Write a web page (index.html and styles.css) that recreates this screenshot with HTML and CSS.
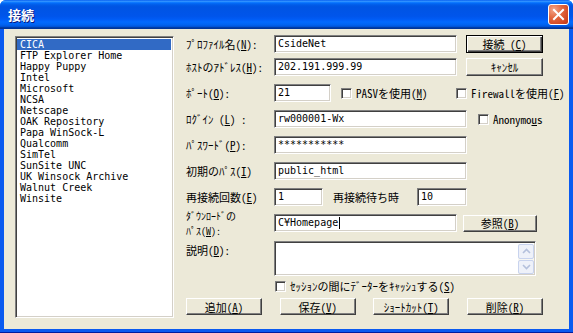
FILE: index.html
```html
<!DOCTYPE html>
<html lang="ja">

<head>
	<meta charset="utf-8">
	<title>接続</title>
	<link rel="stylesheet" href="styles.css">
</head>

<body>
	<div id="dialog">
		<div class="titlebar">
			<span class="title">接続</span>
			<div class="close-btn">
				<svg width="13" height="13" viewBox="0 0 13 13">
					<path d="M2 2 L11 11 M11 2 L2 11" stroke="#fff" stroke-width="2" stroke-linecap="square" />
				</svg>
			</div>
		</div>
		<div class="client">
			<ul class="sitelist sunken">
				<li class="selected">CICA</li>
				<li>FTP Explorer Home</li>
				<li>Happy Puppy</li>
				<li>Intel</li>
				<li>Microsoft</li>
				<li>NCSA</li>
				<li>Netscape</li>
				<li>OAK Repository</li>
				<li>Papa WinSock-L</li>
				<li>Qualcomm</li>
				<li>SimTel</li>
				<li>SunSite UNC</li>
				<li>UK Winsock Archive</li>
				<li>Walnut Creek</li>
				<li>Winsite</li>
			</ul>

			<div class="form">
				<div class="row">
					<span class="lbl">ﾌﾟﾛﾌｧｲﾙ名(<u>N</u>):</span>
					<div class="textbox sunken w-mid">CsideNet</div>
					<div class="btn default side-btn">接続 (<u>C</u>)</div>
				</div>
				<div class="row r-host">
					<span class="lbl">ﾎｽﾄのｱﾄﾞﾚｽ(<u>H</u>):</span>
					<div class="textbox sunken w-mid">202.191.999.99</div>
					<div class="btn side-btn">ｷｬﾝｾﾙ</div>
				</div>
				<div class="row">
					<span class="lbl">ﾎﾟｰﾄ(<u>O</u>):</span>
					<div class="textbox sunken w-port">21</div>
					<div class="chk chk-pasv"><span class="box sunken"></span>PASVを使用(<u>M</u>)</div>
					<div class="chk"><span class="box sunken"></span>Firewallを使用(<u>F</u>)</div>
				</div>
				<div class="row">
					<span class="lbl">ﾛｸﾞｲﾝ (<u>L</u>) :</span>
					<div class="textbox sunken w-long">rw000001-Wx</div>
					<div class="chk chk-anon"><span class="box sunken"></span>Anonymo<u>u</u>s</div>
				</div>
				<div class="row">
					<span class="lbl">ﾊﾟｽﾜｰﾄﾞ(<u>P</u>):</span>
					<div class="textbox sunken w-long">***********</div>
				</div>
				<div class="row">
					<span class="lbl">初期のﾊﾟｽ(<u>I</u>)</span>
					<div class="textbox sunken w-long">public_html</div>
				</div>
				<div class="row">
					<span class="lbl">再接続回数(<u>E</u>)</span>
					<div class="textbox sunken w-small">1</div>
					<span class="lbl-wait">再接続待ち時</span>
					<div class="textbox sunken w-small2">10</div>
				</div>
				<div class="row">
					<span class="lbl lbl-2line">ﾀﾞｳﾝﾛｰﾄﾞの<br>ﾊﾟｽ(<u>W</u>):</span>
					<div class="textbox sunken w-mid">C¥Homepage<span class="caret"></span></div>
					<div class="btn browse-btn">参照(<u>B</u>)</div>
				</div>
				<div class="row row-memo">
					<span class="lbl lbl-memo">説明(<u>D</u>):</span>
					<div class="memo sunken">
						<div class="scrollbar">
							<div class="sb-arrow">
								<svg width="9" height="6" viewBox="0 0 9 6"><path d="M1 5 L4.5 1.5 L8 5" fill="none" stroke="#b4c0dc" stroke-width="1.6" /></svg>
							</div>
							<div class="sb-arrow">
								<svg width="9" height="6" viewBox="0 0 9 6"><path d="M1 1 L4.5 4.5 L8 1" fill="none" stroke="#b4c0dc" stroke-width="1.6" /></svg>
							</div>
						</div>
					</div>
				</div>
				<div class="row row-cache">
					<div class="chk"><span class="box sunken"></span>ｾｯｼｮﾝの間にﾃﾞｰﾀｰをｷｬｯｼｭする(<u>S</u>)</div>
				</div>
				<div class="row row-buttons">
					<div class="btn cmd-btn">追加(<u>A</u>)</div>
					<div class="btn cmd-btn">保存(<u>V</u>)</div>
					<div class="btn cmd-btn">ｼｮｰﾄｶｯﾄ(<u>T</u>)</div>
					<div class="btn cmd-btn">削除(<u>R</u>)</div>
				</div>
			</div>
		</div>
	</div>
</body>

</html>
```

FILE: styles.css
```css
* {
	box-sizing: border-box;
}

body {
	margin: 0;
	background: #fff;
	font-family: "Noto Sans CJK JP", "DejaVu Sans", sans-serif;
	font-size: 11px;
	font-feature-settings: "hwid" 1;
	color: #000;
}

u {
	text-underline-offset: 1px;
}

#dialog {
	width: 573px;
	height: 333px;
	display: flex;
	flex-direction: column;
	background: #0a5af0;
	border-bottom: 1px solid #001d9e;
	border-radius: 6px 6px 0 0;
	overflow: hidden;
}

/* title bar, luna blue */
.titlebar {
	height: 29px;
	flex: none;
	display: flex;
	align-items: center;
	justify-content: space-between;
	padding: 0 4px 0 8px;
	background: linear-gradient(to bottom, #0058ee 0%, #3593ff 4%, #288eff 6%, #127dff 8%, #036ffc 10%, #0262ee 14%, #0057e5 20%, #0054e3 24%, #0055eb 56%, #005bf5 66%, #026afe 76%, #0062ef 86%, #0052d6 92%, #0040ab 94%, #003092 100%);
}

.title {
	color: #fff;
	font-weight: bold;
	font-size: 13px;
	text-shadow: 1px 1px 0 #0a1a80;
	margin-top: -1px;
}

.close-btn {
	width: 21px;
	height: 21px;
	border: 1px solid #fff;
	border-radius: 3px;
	background: radial-gradient(circle at 25% 25%, #f2a58a 0%, #e3683f 40%, #cf4521 80%, #b93a18 100%);
	display: flex;
	align-items: center;
	justify-content: center;
	margin-top: -1px;
}

.client {
	flex: 1;
	margin: 0 4px 3px;
	background: #ece9d8;
	display: flex;
	padding: 6px 0 0 11px;
}

.sunken {
	border: 1px solid;
	border-color: #808080 #fff #fff #808080;
	box-shadow: inset 1px 1px 0 #404040, inset -1px -1px 0 #d4d0c8;
	background: #fff;
}

/* profile list */
.sitelist {
	list-style: none;
	margin: 1px 12px 0 0;
	padding: 2px 2px 0 1px;
	width: 159px;
	height: 282px;
	font-family: "DejaVu Sans Mono", monospace;
	font-feature-settings: normal;
	font-size: 10px;
	line-height: 11px;
}

.sitelist li {
	padding-left: 3px;
	height: 11px;
	white-space: pre;
}

.sitelist .selected {
	background: #316ac5;
	color: #fff;
}

/* form */
.form {
	width: 383px;
	display: flex;
	flex-direction: column;
}

.row {
	display: flex;
	align-items: center;
	height: 18px;
	margin-top: 8px;
	white-space: nowrap;
}

.row:first-child {
	margin-top: 0;
}

.r-host {
	margin-top: 5px;
}

.lbl {
	width: 88px;
	flex: none;
	line-height: 12px;
}

.lbl-2line {
	font-size: 10px;
	line-height: 15px;
}

.textbox {
	height: 18px;
	padding: 0 0 0 3px;
	font-family: "DejaVu Sans Mono", monospace;
	font-feature-settings: normal;
	font-size: 10px;
	line-height: 16px;
	display: flex;
	align-items: center;
}

.caret {
	display: inline-block;
	width: 1px;
	height: 12px;
	background: #000;
	margin-left: 1px;
}

.w-mid {
	width: 183px;
}

.w-long {
	width: 193px;
}

.w-port {
	width: 57px;
}

.w-small {
	width: 49px;
}

.w-small2 {
	width: 50px;
}

.lbl-wait {
	width: 84px;
	margin-left: 10px;
}

/* buttons */
.btn {
	background: #ece9d8;
	border: 1px solid;
	border-color: #fff #404040 #404040 #fff;
	box-shadow: inset -1px -1px 0 #808080;
	display: flex;
	align-items: center;
	justify-content: center;
	line-height: 12px;
}

.btn.default {
	border-color: #000;
	box-shadow: inset 1px 1px 0 #fff, inset -1px -1px 0 #404040, inset -2px -2px 0 #808080;
}

.side-btn {
	width: 77px;
	height: 18px;
	margin-left: 9px;
}

.browse-btn {
	width: 74px;
	height: 17px;
	margin-left: 6px;
}

.row-buttons {
	margin-top: 6px;
	height: 17px;
	width: 357px;
	justify-content: space-between;
}

.cmd-btn {
	width: 76px;
	height: 17px;
}

/* check boxes */
.chk {
	display: flex;
	align-items: center;
	margin-left: 10px;
}

.chk .box {
	width: 11px;
	height: 11px;
	margin-right: 4px;
	flex: none;
}

.chk-pasv {
	width: 105px;
}

.chk-anon {
	margin-left: 11px;
}

.row-cache {
	margin-top: 4px;
	height: 12px;
}

.row-cache .chk {
	margin-left: 89px;
}

/* memo */
.row-memo {
	margin-top: 9px;
	height: 35px;
	align-items: flex-start;
}

.lbl-memo {
	padding-top: 3px;
}

.memo {
	width: 262px;
	height: 35px;
	display: flex;
	justify-content: flex-end;
	padding: 2px 1px 1px 0;
}

.scrollbar {
	width: 16px;
	display: flex;
	flex-direction: column;
	gap: 1px;
	background: #f6f6f2;
}

.sb-arrow {
	flex: 1;
	background: #eef1f9;
	border: 1px solid #c8d3ee;
	border-radius: 2px;
	display: flex;
	align-items: center;
	justify-content: center;
}
```
